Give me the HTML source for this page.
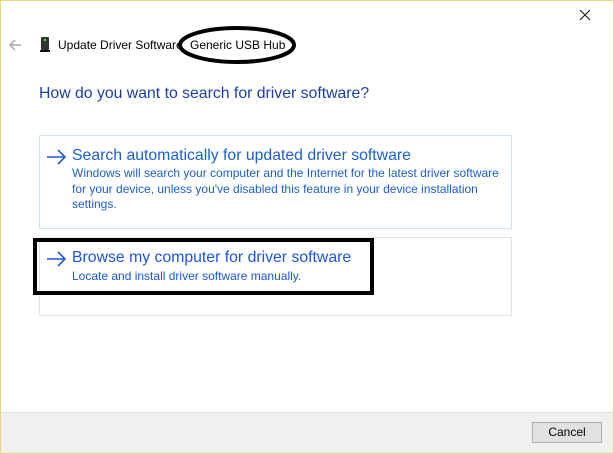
<!DOCTYPE html>
<html><head><style>
*{margin:0;padding:0;box-sizing:border-box}
body{width:614px;height:454px;overflow:hidden;background:#fff;font-family:"Liberation Sans",sans-serif;position:relative}
.frame{position:absolute;left:0;top:0;width:614px;height:454px;border:1px solid #e6d77a;pointer-events:none;z-index:5}
.t{position:absolute;white-space:nowrap}
.box{position:absolute;border:1px solid #cfe3f3}
.blue{color:#1c5fd0}
.lb{color:#1a56e0}
</style></head><body>
<div class="frame"></div>
<svg class="t" style="left:578px;top:8px" width="14" height="14"><path d="M2 2L12 12M12 2L2 12" stroke="#222" stroke-width="1.2"/></svg>
<svg class="t" style="left:8px;top:38px" width="14" height="14"><path d="M13 7H2M7 2L2 7L7 12" stroke="#aaa" stroke-width="1.5" fill="none"/></svg>
<svg class="t" style="left:40px;top:37px" width="10" height="15"><rect x="1" y="0" width="8" height="13" rx="1" fill="#333"/><rect x="4" y="2" width="2" height="2" fill="#2f2"/><rect x="0" y="13" width="10" height="2" fill="#111"/></svg>
<div class="t" style="left:58px;top:38px;font-size:12px;color:#000">Update Driver Software</div>
<div class="t" style="left:190px;top:38px;font-size:12px;color:#000">Generic USB Hub</div>
<svg class="t" style="left:176px;top:25px" width="124" height="42"><ellipse cx="61" cy="20" rx="57" ry="17" fill="none" stroke="#000" stroke-width="4"/></svg>
<div class="t" style="left:39px;top:85px;font-size:15.8px;color:#1a3fa8">How do you want to search for driver software?</div>
<div class="box" style="left:39px;top:135px;width:473px;height:94px"></div>
<div class="box" style="left:39px;top:237px;width:473px;height:79px;border-color:#e2e2e2"></div>
<svg class="t" style="left:46px;top:149px" width="22" height="16"><path d="M1 8H19M12 1L19 8L12 15" stroke="#1c5fd0" stroke-width="1.6" fill="none"/></svg>
<div class="t blue" style="left:72px;top:147px;font-size:15.8px">Search automatically for updated driver software</div>
<div class="t blue" style="left:72px;top:166px;font-size:12px;line-height:15.5px">Windows will search your computer and the Internet for the latest driver software<br>for your device, unless you've disabled this feature in your device installation<br>settings.</div>
<svg class="t" style="left:46px;top:251px" width="22" height="16"><path d="M1 8H19M12 1L19 8L12 15" stroke="#1a56e0" stroke-width="1.6" fill="none"/></svg>
<div class="t lb" style="left:72px;top:249px;font-size:15.8px">Browse my computer for driver software</div>
<div class="t lb" style="left:72px;top:269px;font-size:12px">Locate and install driver software manually.</div>
<div style="position:absolute;left:33px;top:238px;width:341px;height:57px;border:4px solid #000"></div>
<div style="position:absolute;left:0;top:412px;width:614px;height:42px;background:#f0f0f0;border-top:1px solid #dcdcdc"></div>
<div class="t" style="left:532px;top:422px;width:70px;height:21px;background:#e1e1e1;border:1px solid #adadad;font-size:12px;text-align:center;line-height:19px">Cancel</div>
</body></html>
